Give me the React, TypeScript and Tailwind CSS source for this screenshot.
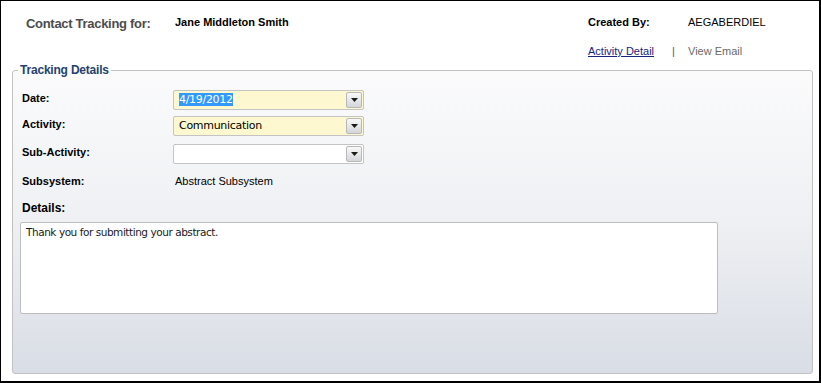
const label = "font-['Liberation_Sans',Arial,sans-serif] text-[11px] leading-[14px] font-bold text-black";

const DropButton = () => (
  <div className="flex h-[16px] w-[16px] items-center justify-center rounded-[2px] border border-[#b8b8b8] bg-gradient-to-b from-[#f8f8f8] to-[#d4d6da]">
    <svg width="7" height="4" viewBox="0 0 7 4">
      <path d="M0 0h7L3.5 4z" fill="#1a1a1a" />
    </svg>
  </div>
);

const Combo = ({ value, tint, selected }: { value?: string; tint?: boolean; selected?: boolean }) => (
  <div
    className={`flex h-[20px] w-[191px] items-center justify-between rounded-[2px] border border-[#c4c4c4] pl-[5px] pr-[1px] ${
      tint ? "bg-[#fdf8cf]" : "bg-white"
    }`}
  >
    <span className="font-['DejaVu_Sans',sans-serif] text-[11px] leading-[14px] tracking-[-0.3px] text-black">
      {value && (selected ? <span className="bg-[#3399ff] text-white">{value}</span> : value)}
    </span>
    <DropButton />
  </div>
);

export default function App() {
  return (
    <div className="h-[383px] w-[821px] border-t border-l border-r-2 border-b-2 border-black bg-white font-['Liberation_Sans',Arial,sans-serif]">
      <div className="flex h-[62px] pt-[14px]">
        <div className="w-[174px] pl-[25px] pt-[1px] text-[13px] leading-[16px] font-bold tracking-[-0.3px] text-[#4c4c4c]">
          Contact Tracking for:
        </div>
        <div className="w-[413px] text-[11px] leading-[14px] font-bold text-black">Jane Middleton Smith</div>
        <div className="flex flex-col text-[11px] leading-[14px]">
          <div className="flex">
            <span className="w-[100px] font-bold text-black">Created By:</span>
            <span className="text-black">AEGABERDIEL</span>
          </div>
          <div className="mt-[15px] flex">
            <span className="w-[84px] text-[#1a237e] underline">Activity Detail</span>
            <span className="w-[16px] text-[#555]">|</span>
            <span className="text-[#6a6a6a]">View Email</span>
          </div>
        </div>
      </div>

      <fieldset className="ml-[11px] h-[311px] w-[801px] rounded-[3px] border border-[#c2c2c2] bg-gradient-to-b from-[#fbfbfc] via-[#eef0f3] to-[#d9dde5] pl-[9px] pr-0">
        <legend className="ml-[-4px] px-[2px] text-[12px] leading-[14px] font-bold tracking-[-0.2px] text-[#25426f]">
          Tracking Details
        </legend>

        <div className="mt-[13px] flex flex-col gap-[6px]">
          <div className="flex items-start">
            <span className={`w-[151px] pt-[1px] ${label}`}>Date:</span>
            <Combo value="4/19/2012" tint selected />
          </div>
          <div className="flex items-start">
            <span className={`w-[151px] pt-[1px] ${label}`}>Activity:</span>
            <Combo value="Communication" tint />
          </div>
          <div className="mt-[2px] flex items-start">
            <span className={`w-[151px] pt-[1px] ${label}`}>Sub-Activity:</span>
            <Combo />
          </div>
          <div className="mt-[4px] flex items-center">
            <span className={`w-[153px] ${label}`}>Subsystem:</span>
            <span className="text-[11px] leading-[14px] text-black">Abstract Subsystem</span>
          </div>
        </div>

        <div className="mt-[13px] text-[12px] leading-[15px] font-bold text-black">Details:</div>
        <div className="ml-[-2px] mt-[6px] h-[92px] w-[698px] rounded-[2px] border border-[#bdbdbd] bg-white px-[5px] py-[2px] font-['DejaVu_Sans',sans-serif] text-[10.5px] leading-[14px] tracking-[-0.45px] text-[#1a1a1a]">
          Thank you for submitting your abstract.
        </div>
      </fieldset>
    </div>
  );
}
